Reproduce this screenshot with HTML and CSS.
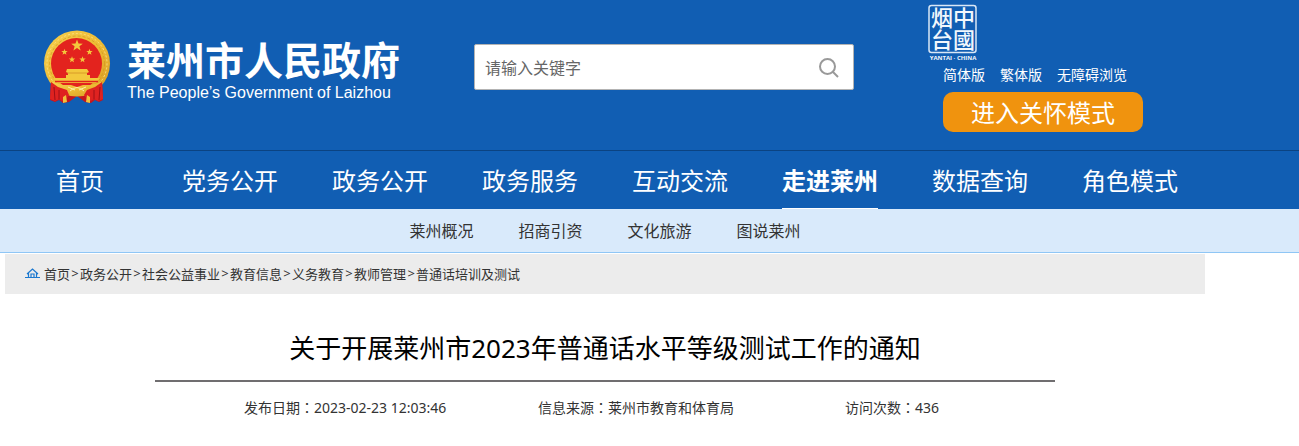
FILE: index.html
```html
<!DOCTYPE html>
<html lang="zh-CN">
<head>
<meta charset="utf-8">
<meta name="viewport" content="width=device-width, initial-scale=1">
<title>关于开展莱州市2023年普通话水平等级测试工作的通知</title>
<link rel="stylesheet" href="styles.css">
</head>
<body>
<header class="site-header">
  <div class="wrap header-grid">
    <div class="brand">
      <svg class="emblem" viewBox="0 0 68 74" aria-hidden="true">
        <defs>
          <linearGradient id="gold" x1="0" y1="0" x2="1" y2="1">
            <stop offset="0" stop-color="#f6cf4e"/>
            <stop offset=".5" stop-color="#eebc35"/>
            <stop offset="1" stop-color="#d99b22"/>
          </linearGradient>
          <path id="star" d="M0-6 1.5-1.9 5.8-1.8 2.4.8 3.6 5 0 2.5-3.6 5-2.4.8-5.8-1.8-1.5-1.9Z"/>
        </defs>
        <path fill="#c5161d" d="M8 50 7 70l5 2 4-2 4 3 6-1 8-6 8 6 6 1 4-3 4 2 4-2-1-20-7 5-20 7-18-7Z"/>
        <circle cx="34" cy="33.500" r="33" fill="url(#gold)"/>
        <circle cx="34" cy="33.500" r="30" fill="none" stroke="#fbe083" stroke-width="1" stroke-dasharray="2 2"/>
        <circle cx="34" cy="33.500" r="27.500" fill="none" stroke="#cf9522" stroke-width=".7" stroke-dasharray="3 2"/>
        <circle cx="33.500" cy="33.500" r="25.500" fill="#e3231e"/>
        <g fill="#f3c83c">
          <use href="#star" transform="translate(34 15.500)"/>
          <use href="#star" transform="translate(21.500 22) scale(.55)"/>
          <use href="#star" transform="translate(46.500 22) scale(.55)"/>
          <use href="#star" transform="translate(29 29.500) scale(.55)"/>
          <use href="#star" transform="translate(39.500 29.500) scale(.55)"/>
          <path d="M24 39h20l2 3-2 1v2h3v3h10l-4 5H14l-4-5h13v-3h2v-2l-2-1Z"/>
        </g>
        <path d="M24 43h20" stroke="#d29123" stroke-width=".8"/>
        <path d="M12 51.500h43" stroke="#e3231e" stroke-width="1.500"/>
        <path fill="url(#gold)" d="m9 52 11 3 8 0 6 2 6-2 8 0 11-3-6 7-9 2-4 5h-12l-4-5-9-2Z"/>
        <path d="M27 61q7-7 14 0M25 57l7 3M43 57l-7 3" fill="none" stroke="#fff0a2" stroke-width="1"/>
        <path fill="#df2220" d="m8 52 7 5 9 3 2 5-5 7-5-3-4 2-5-2Zm51 0-7 5-8 3-3 5 5 7 5-3 4 2 5-2Z"/>
        <path d="m11 57 1 13M16 60v9M57 57l-1 13M51 60v9" stroke="#9e1017" stroke-width="1"/>
        <path fill="#f0c23b" d="m20 67 3-2 1 7-4 1Zm27 0-3-2-1 7 4 1Z"/>
      </svg>
      <div class="brand-text">
        <div class="brand-cn">莱州市人民政府</div>
        <div class="brand-en">The People’s Government of Laizhou</div>
      </div>
    </div>

    <form class="search">
      <input class="search-input" type="text" placeholder="请输入关键字" aria-label="请输入关键字">
      <button class="search-button" type="button" aria-label="搜索">
        <svg viewBox="0 0 20 20" aria-hidden="true"><circle cx="8.500" cy="8.500" r="7.500"/><path d="m14 14 5 5"/></svg>
      </button>
    </form>

    <div class="tools">
      <svg class="seal" viewBox="0 0 50 58" role="img" aria-label="中国烟台">
        <rect x="1" y="1.500" width="47" height="47" rx="2.500" fill="none" stroke="#d9e7f6" stroke-width="1.500"/>
        <g class="seal-glyphs">
          <text x="3" y="22">烟</text>
          <text x="25" y="22">中</text>
          <text x="3" y="44">台</text>
          <text x="25" y="44">國</text>
        </g>
        <text class="seal-caption" x="25" y="56">YANTAI · CHINA</text>
      </svg>
      <div class="versions">
        <a href="#">简体版</a>
        <a href="#">繁体版</a>
        <a href="#">无障碍浏览</a>
      </div>
      <button class="care" type="button">进入关怀模式</button>
    </div>
  </div>
</header>

<nav class="main-nav">
  <div class="wrap main-list">
    <a href="#"><span>首页</span></a>
    <a href="#"><span>党务公开</span></a>
    <a href="#"><span>政务公开</span></a>
    <a href="#"><span>政务服务</span></a>
    <a href="#"><span>互动交流</span></a>
    <a class="active" href="#"><span>走进莱州</span></a>
    <a href="#"><span>数据查询</span></a>
    <a href="#"><span>角色模式</span></a>
  </div>
</nav>

<nav class="sub-nav">
  <div class="wrap sub-list">
    <a href="#">莱州概况</a>
    <a href="#">招商引资</a>
    <a href="#">文化旅游</a>
    <a href="#">图说莱州</a>
  </div>
</nav>

<main class="wrap">
  <nav class="crumbs">
    <svg class="home" viewBox="0 0 15 11" aria-hidden="true"><path d="M0 9.500h15M2 6l5.500-5L13 6M3.500 5v4.500M11.500 5v4.500M6 9.500V6h3v3.500"/></svg>
    <a href="#">首页</a><span>&gt;</span><a href="#">政务公开</a><span>&gt;</span><a href="#">社会公益事业</a><span>&gt;</span><a href="#">教育信息</a><span>&gt;</span><a href="#">义务教育</a><span>&gt;</span><a href="#">教师管理</a><span>&gt;</span><a href="#">普通话培训及测试</a>
  </nav>

  <article class="article">
    <h1>关于开展莱州市2023年普通话水平等级测试工作的通知</h1>
    <div class="meta">
      <div>发布日期<span class="colon" lang="zh-TW">：</span>2023-02-23 12:03:46</div>
      <div>信息来源<span class="colon" lang="zh-TW">：</span>莱州市教育和体育局</div>
      <div>访问次数<span class="colon" lang="zh-TW">：</span>436</div>
    </div>
  </article>
</main>
</body>
</html>
```

FILE: styles.css
```css
* {
  box-sizing: border-box;
}

body {
  margin: 0;
  background: #fff;
  color: #333;
  font-family: "Noto Sans", "Noto Sans CJK SC", sans-serif;
  font-size: 14px;
}

a {
  color: inherit;
  text-decoration: none;
}

button,
input {
  font-family: inherit;
}

.wrap {
  max-width: 1200px;
  margin-left: 5px;
}

.site-header {
  min-height: 150px;
  background: #115eb3;
  color: #fff;
}

.header-grid {
  display: grid;
  grid-template-columns: 469px 449px 1fr;
  align-items: start;
}

.brand {
  display: flex;
  gap: 16px;
  padding: 30px 0 0 38px;
}

.emblem {
  width: 68px;
  height: 74px;
}

.brand-text {
  padding-top: 6px;
}

.brand-cn {
  font-family: "Noto Sans CJK SC", sans-serif;
  font-size: 39px;
  font-weight: 700;
  line-height: 44px;
}

.brand-en {
  padding-top: 2px;
  font-family: "Liberation Sans", sans-serif;
  font-size: 16px;
  line-height: 22px;
}

.search {
  display: flex;
  width: 380px;
  height: 46px;
  margin-top: 44px;
  border: 1px solid #b3b3b3;
  border-radius: 2px;
  background: #fff;
}

.search-input {
  flex: 1;
  min-width: 0;
  padding: 2px 0 0 10px;
  border: 0;
  outline: 0;
  background: transparent;
  color: #555;
  font-size: 16px;
}

.search-input::placeholder {
  color: #666;
}

.search-button {
  display: flex;
  align-items: center;
  padding: 2px 14px 0 0;
  border: 0;
  background: transparent;
}

.search-button svg {
  width: 20px;
  height: 20px;
  fill: none;
  stroke: #999;
  stroke-width: 2;
}

.tools {
  display: flex;
  flex-direction: column;
  align-items: flex-start;
  padding: 4px 0 0 5px;
}

.seal {
  width: 50px;
  height: 58px;
  overflow: visible;
}

.seal-glyphs {
  fill: #f2f7fc;
  font-family: "Noto Sans CJK TC", sans-serif;
  font-size: 22px;
  font-weight: 500;
}

.seal-caption {
  fill: #f2f7fc;
  font-family: "Open Sans", sans-serif;
  font-size: 6px;
  font-weight: 700;
  text-anchor: middle;
}

.versions {
  display: flex;
  gap: 15px;
  margin-left: 15px;
  padding: 3px 0 7px;
  line-height: 20px;
}

.care {
  width: 200px;
  height: 40px;
  margin-left: 15px;
  padding: 0;
  border: 0;
  border-radius: 10px;
  background: #f0930e;
  color: #fff;
  font-size: 24px;
  line-height: 42px;
}

.main-nav {
  border-top: 1px solid #0b4382;
  background: #115eb3;
  color: #fff;
}

.main-list {
  display: grid;
  grid-template-columns: repeat(8, 1fr);
  font-size: 24px;
  line-height: 55px;
  text-align: center;
}

.main-list span {
  display: inline-block;
  padding-top: 2px;
  border-bottom: 1px solid transparent;
}

.main-list a {
  display: flex;
  justify-content: center;
}

.main-list .active span {
  border-color: #fff;
  font-weight: 700;
}

.sub-nav {
  border-bottom: 1px solid #8fc6f5;
  background: #d9eafb;
}

.sub-list {
  display: flex;
  justify-content: center;
  gap: 45px;
  padding-top: 2px;
  font-size: 16px;
  line-height: 41px;
}

.crumbs {
  display: flex;
  align-items: center;
  height: 40px;
  margin-top: 1px;
  padding: 0 0 2px 20px;
  background: #ececec;
  font-size: 13px;
}

.crumbs span {
  width: 10px;
  text-align: center;
}

.home {
  width: 15px;
  height: 11px;
  margin-right: 4px;
  fill: none;
  stroke: #1b78cf;
  stroke-width: 1.2;
}

.article {
  max-width: 900px;
  margin: 32px auto 0;
}

.article h1 {
  margin: 0;
  padding-bottom: 10px;
  border-bottom: 2px solid #706e70;
  color: #000;
  font-size: 26px;
  font-weight: 400;
  line-height: 44px;
  text-align: center;
}

.meta {
  display: grid;
  grid-template-columns: 294px 307px 1fr;
  padding: 15px 0 16px 89px;
  line-height: 22px;
}

.colon {
  font-family: "Noto Sans CJK TC", sans-serif;
  line-height: 1;
}
```
